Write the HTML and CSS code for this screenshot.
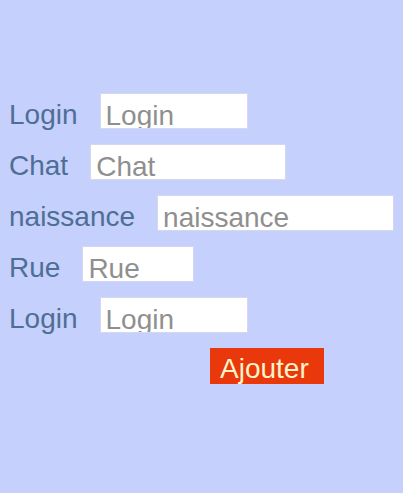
FILE: index.html
```html
<!DOCTYPE html>
<html lang="fr">
<head>
<meta charset="utf-8">
<title>Formulaire</title>
<link rel="stylesheet" href="styles.css">
</head>
<body>
<form class="form">
  <div class="row"><label class="lbl">Login</label><input class="field w-login" placeholder="Login"></div>
  <div class="row"><label class="lbl">Chat</label><input class="field w-chat" placeholder="Chat"></div>
  <div class="row"><label class="lbl">naissance</label><input class="field w-naiss" placeholder="naissance"></div>
  <div class="row"><label class="lbl">Rue</label><input class="field w-rue" placeholder="Rue"></div>
  <div class="row"><label class="lbl">Login</label><input class="field w-login" placeholder="Login"></div>
  <div class="actions"><button type="button" class="btn">Ajouter</button></div>
</form>
</body>
</html>
```

FILE: styles.css
```css
html, body {
  margin: 0;
  padding: 0;
  background: #c5d0fc;
  height: 100%;
}
body {
  font-family: "Liberation Sans", Arial, sans-serif;
}
.form {
  padding: 93px 0 0 9px;
  display: flex;
  flex-direction: column;
  gap: 15px;
}
.row {
  display: flex;
  align-items: flex-start;
  gap: 22px;
}
.lbl {
  font-size: 28px;
  color: #4f6e95;
  line-height: 36px;
  padding-top: 4px;
  height: 36px;
  box-sizing: border-box;
}
.field {
  box-sizing: border-box;
  height: 36px;
  font-family: "Liberation Sans", Arial, sans-serif;
  font-size: 28px;
  line-height: 25px;
  padding: 9px 4px 0 5px;
  margin: 0;
  border: 1px solid #d3d8ef;
  background: #fff;
  color: #333;
  outline: none;
}
.field::placeholder {
  color: #8f8f8f;
}
.w-login { width: 148px; }
.w-chat { width: 196px; }
.w-naiss { width: 237px; }
.w-rue { width: 112px; }
.actions {
  padding-left: 201px;
}
.btn {
  display: block;
  box-sizing: border-box;
  height: 36px;
  width: 114px;
  padding: 6px 0 0 10px;
  text-align: left;
  border: none;
  background: #e8380c;
  color: #fff3c8;
  font-family: "Liberation Sans", Arial, sans-serif;
  font-size: 28px;
  line-height: 30px;
}
```
